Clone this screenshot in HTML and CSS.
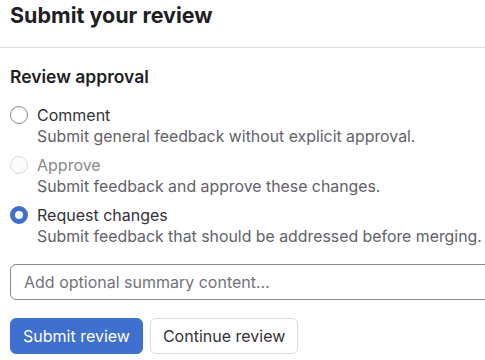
FILE: index.html
```html
<!DOCTYPE html>
<html lang="en">
  <head>
    <meta charset="UTF-8" />
    <meta name="viewport" content="width=device-width, initial-scale=1.0" />
    <title>Submit your review</title>
    <link rel="stylesheet" href="styles.css">
  </head>
  <body>
    <div class="review-panel">
      <h1 class="panel-title">Submit your review</h1>

      <div class="panel-body">
        <h2 class="section-title">Review approval</h2>

        <label class="option">
          <input type="radio" name="approval" value="comment" />
          <span class="option-text">
            <span class="option-label">Comment</span>
            <span class="option-desc">Submit general feedback without explicit approval.</span>
          </span>
        </label>

        <label class="option is-disabled">
          <input type="radio" name="approval" value="approve" disabled />
          <span class="option-text">
            <span class="option-label">Approve</span>
            <span class="option-desc">Submit feedback and approve these changes.</span>
          </span>
        </label>

        <label class="option">
          <input type="radio" name="approval" value="request" checked />
          <span class="option-text">
            <span class="option-label">Request changes</span>
            <span class="option-desc">Submit feedback that should be addressed before merging.</span>
          </span>
        </label>

        <div class="summary-wrap">
          <input class="summary" type="text" placeholder="Add optional summary content..." />
        </div>

        <div class="actions">
          <button class="btn btn-primary">Submit review</button>
          <button class="btn">Continue review</button>
        </div>
      </div>
    </div>
  </body>
</html>
```

FILE: styles.css
```css
html,
body {
  margin: 0;
  overflow: hidden;
}

body {
  font-family: Inter, "Noto Sans", sans-serif;
  color: #333238;
  background: #fff;
}

.review-panel {
  width: 485px;
}

.panel-title {
  margin: 0;
  padding: 0 10px;
  height: 48px;
  line-height: 30px;
  font-size: 21.5px;
  font-weight: 700;
  color: #1f1e24;
  border-bottom: 1px solid #dcdcde;
  box-sizing: border-box;
}

.panel-body {
  padding: 17px 0 0 10px;
}

.section-title {
  margin: 0 0 15px;
  font-size: 17.5px;
  font-weight: 600;
  line-height: 24px;
  color: #1f1e24;
}

.option {
  display: flex;
  align-items: flex-start;
  gap: 9px;
  margin-bottom: 6px;
}

.option input {
  appearance: none;
  flex: none;
  width: 18px;
  height: 18px;
  margin: 2px 0 0;
  border: 1px solid #89888d;
  border-radius: 50%;
  background: #fff;
}

.option input:checked {
  border: 5px solid #3f6fcf;
  background: #fff;
}

.option input:disabled {
  border-color: #dcdcde;
  background: #fbfafd;
}

.option-text {
  display: flex;
  flex-direction: column;
  white-space: nowrap;
}

.option-label {
  font-size: 16px;
  line-height: 22px;
  color: #333238;
}

.option-desc {
  font-size: 15.85px;
  line-height: 22px;
  color: #626168;
}

.is-disabled .option-label {
  color: #89888d;
}

.summary-wrap {
  overflow: hidden;
  margin-top: 16px;
}

.summary {
  display: block;
  width: 500px;
  height: 36px;
  padding: 0 13px;
  box-sizing: border-box;
  font-family: inherit;
  font-size: 16px;
  border: 1px solid #89888d;
  border-radius: 6px;
  outline: none;
}

.summary::placeholder {
  color: #737278;
}

.actions {
  display: flex;
  gap: 7px;
  margin-top: 18px;
}

.btn {
  height: 36px;
  padding: 0 12px;
  font-family: inherit;
  font-size: 16px;
  color: #333238;
  background: #fff;
  border: 1px solid #dcdcde;
  border-radius: 6px;
}

.btn-primary {
  color: #fff;
  background: #3f6fcf;
  border-color: #3f6fcf;
}
```
